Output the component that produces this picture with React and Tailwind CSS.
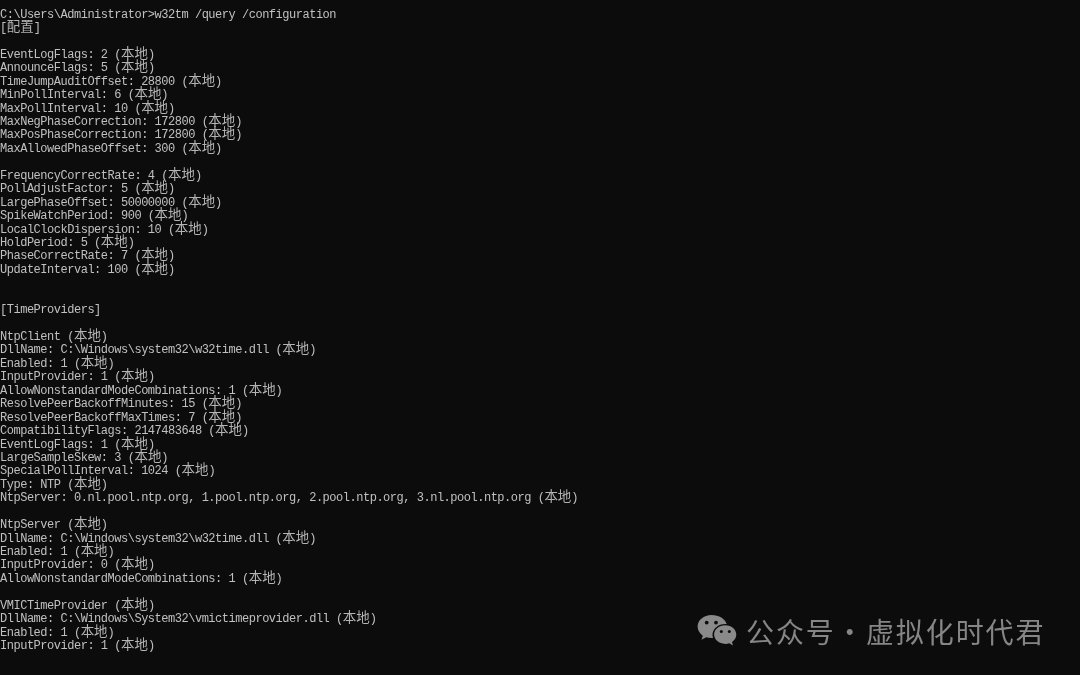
const LINES = [
  'C:\\Users\\Administrator>w32tm /query /configuration',
  '[配置]',
  '',
  'EventLogFlags: 2 (本地)',
  'AnnounceFlags: 5 (本地)',
  'TimeJumpAuditOffset: 28800 (本地)',
  'MinPollInterval: 6 (本地)',
  'MaxPollInterval: 10 (本地)',
  'MaxNegPhaseCorrection: 172800 (本地)',
  'MaxPosPhaseCorrection: 172800 (本地)',
  'MaxAllowedPhaseOffset: 300 (本地)',
  '',
  'FrequencyCorrectRate: 4 (本地)',
  'PollAdjustFactor: 5 (本地)',
  'LargePhaseOffset: 50000000 (本地)',
  'SpikeWatchPeriod: 900 (本地)',
  'LocalClockDispersion: 10 (本地)',
  'HoldPeriod: 5 (本地)',
  'PhaseCorrectRate: 7 (本地)',
  'UpdateInterval: 100 (本地)',
  '',
  '',
  '[TimeProviders]',
  '',
  'NtpClient (本地)',
  'DllName: C:\\Windows\\system32\\w32time.dll (本地)',
  'Enabled: 1 (本地)',
  'InputProvider: 1 (本地)',
  'AllowNonstandardModeCombinations: 1 (本地)',
  'ResolvePeerBackoffMinutes: 15 (本地)',
  'ResolvePeerBackoffMaxTimes: 7 (本地)',
  'CompatibilityFlags: 2147483648 (本地)',
  'EventLogFlags: 1 (本地)',
  'LargeSampleSkew: 3 (本地)',
  'SpecialPollInterval: 1024 (本地)',
  'Type: NTP (本地)',
  'NtpServer: 0.nl.pool.ntp.org, 1.pool.ntp.org, 2.pool.ntp.org, 3.nl.pool.ntp.org (本地)',
  '',
  'NtpServer (本地)',
  'DllName: C:\\Windows\\system32\\w32time.dll (本地)',
  'Enabled: 1 (本地)',
  'InputProvider: 0 (本地)',
  'AllowNonstandardModeCombinations: 1 (本地)',
  '',
  'VMICTimeProvider (本地)',
  'DllName: C:\\Windows\\System32\\vmictimeprovider.dll (本地)',
  'Enabled: 1 (本地)',
  'InputProvider: 1 (本地)',
];

// CJK runs are double width, so they get a bigger size to stay on the console grid
function ConsoleLine({ text }) {
  const parts = text.split(/([\u4e00-\u9fff]+)/);
  return (
    <div className="h-[13.44px] whitespace-pre leading-[13.44px]">
      {parts.map((part, i) =>
        i % 2 === 1 ? (
          <span
            key={i}
            className="font-['Noto_Sans_CJK_SC',sans-serif] text-[13.44px] leading-[0px] tracking-normal text-[#b4b4b4]"
          >
            {part}
          </span>
        ) : (
          <span key={i}>{part}</span>
        ),
      )}
    </div>
  );
}

function WeChatIcon() {
  return (
    <svg width="42" height="34" viewBox="0 0 42 34" className="shrink-0">
      <path
        d="M14.5 1C6.800 1 .6 6.200.6 12.600c0 3.700 2 6.900 5.200 9.100L4.500 25.800l4.700-2.500c1.700.5 3.400.8 5.300.8.500 0 1 0 1.500-.1-.3-1-.5-2-.5-3.100 0-6.100 5.700-11 12.800-11 .5 0 .9 0 1.400.1C28.300 5 22 1 14.500 1z"
        fill="#8a8a8a"
      />
      <path
        d="M28.300 11.300c-6.200 0-11.200 4.200-11.200 9.300s5 9.300 11.200 9.300c1.400 0 2.700-.2 3.900-.6l3.800 2.100-1-3.400c2.600-1.700 4.300-4.400 4.300-7.400 0-5.100-4.900-9.300-11-9.300z"
        fill="#8a8a8a"
      />
      <circle cx="9.700" cy="8.600" r="1.900" fill="#0c0c0c" />
      <circle cx="19" cy="8.600" r="1.900" fill="#0c0c0c" />
      <circle cx="24.300" cy="17.500" r="1.500" fill="#0c0c0c" />
      <circle cx="32.300" cy="17.500" r="1.500" fill="#0c0c0c" />
    </svg>
  );
}

export default function App() {
  return (
    <div className="relative h-[675px] w-[1080px] overflow-hidden bg-[#0c0c0c] pt-[8.5px] font-['Liberation_Mono',monospace] text-[12px] tracking-[-0.48px] text-[#c0c0c0]">
      <div className="blur-[0.35px]">
        {LINES.map((line, i) => (
          <ConsoleLine key={i} text={line} />
        ))}
      </div>
      <div className="absolute left-[697px] top-[611px] flex items-center gap-[7px] font-['Noto_Sans_CJK_SC',sans-serif] text-[28px] leading-[40px] tracking-[1.9px] text-[#868686] [word-spacing:-8px] blur-[0.3px]">
        <WeChatIcon />
        <span className="whitespace-pre">公众号 · 虚拟化时代君</span>
      </div>
    </div>
  );
}
